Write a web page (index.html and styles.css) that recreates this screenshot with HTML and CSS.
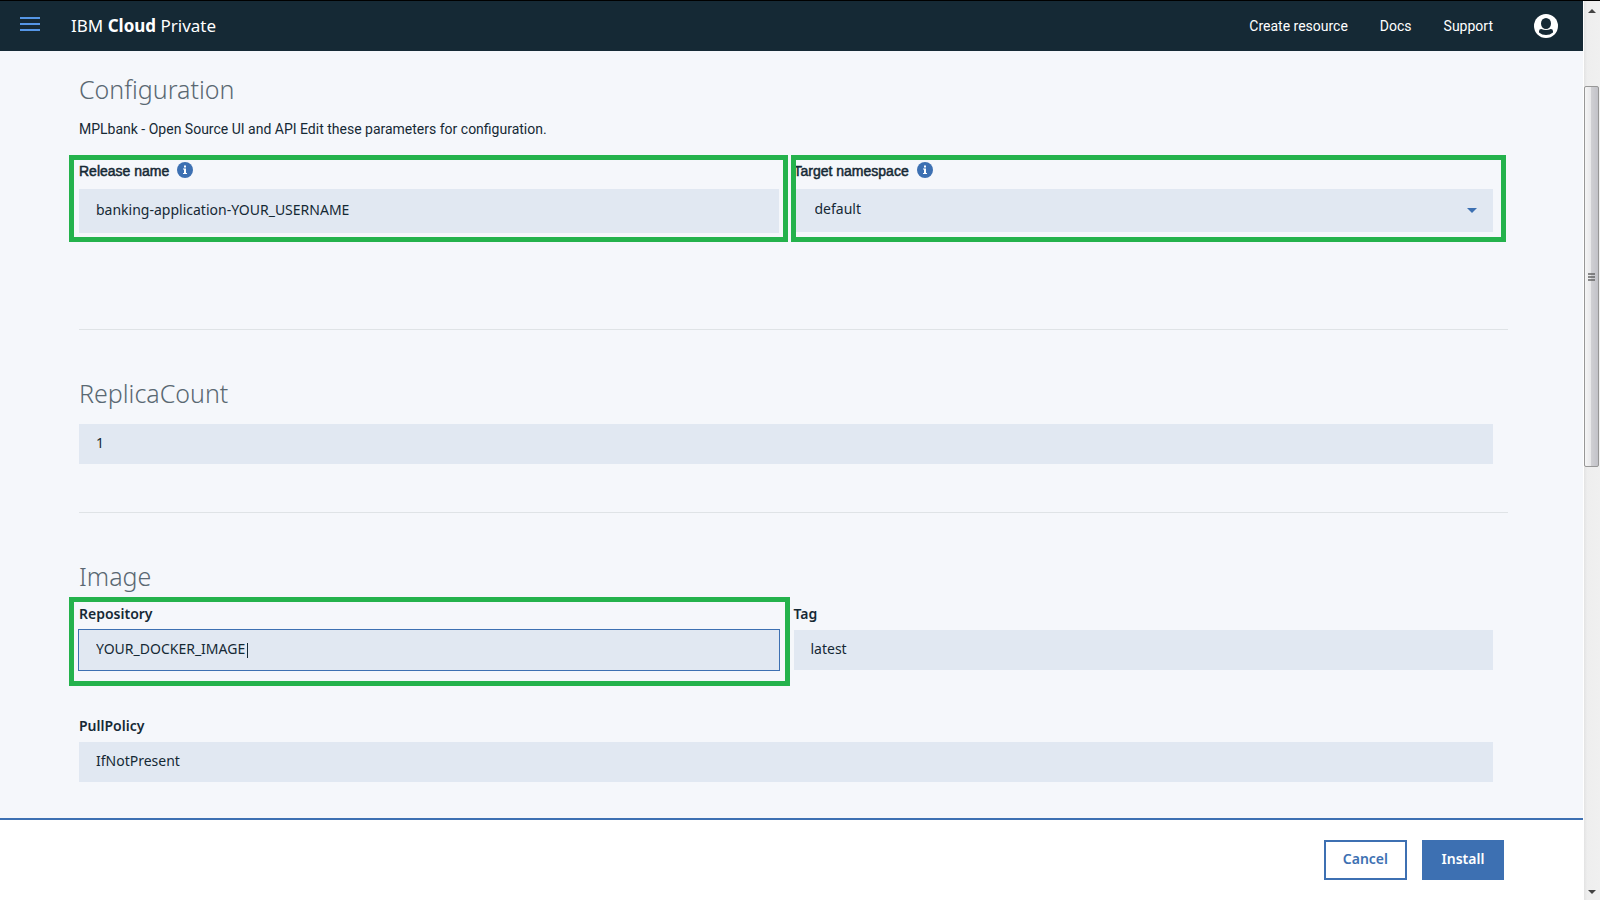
FILE: index.html
```html
<!DOCTYPE html>
<html lang="en">
<head>
<meta charset="utf-8">
<title>IBM Cloud Private</title>
<link rel="stylesheet" href="styles.css">
</head>
<body>
<div class="app">
  <header class="header">
    <button class="menu-button" type="button" aria-label="Menu">
      <svg width="20" height="14" viewBox="0 0 20 14"><path d="M0 1h20M0 7h20M0 13h20" stroke="#5596e6" stroke-width="2"/></svg>
    </button>
    <a class="brand" href="#">IBM <b>Cloud</b> Private</a>
    <nav class="nav">
      <a href="#">Create resource</a>
      <a href="#">Docs</a>
      <a href="#">Support</a>
    </nav>
    <button class="user-button" type="button" aria-label="Account">
      <svg width="24" height="24" viewBox="0 0 24 24"><circle cx="12" cy="12" r="12" fill="#fff"/><ellipse cx="12" cy="9.5" rx="5" ry="5.5" fill="#152935"/><path d="M5 17.200Q5 15 7.200 15Q12 17 16.800 15Q19 15 19 17.200V18.500Q16 21 12 21T5 18.500Z" fill="#152935"/></svg>
    </button>
  </header>

  <main class="content">
    <section class="section section-config">
      <h2>Configuration</h2>
      <p class="description">MPLbank - Open Source UI and API Edit these parameters for configuration.</p>
      <div class="row">
        <div class="field field-tall">
          <div class="label-line">
            <label class="label-plain" for="release">Release name</label>
            <svg class="info" width="16" height="16" viewBox="0 0 16 16"><circle cx="8" cy="8" r="8" fill="#3d70b2"/><path d="M7 3.500h2v2H7zM6 6.500h3v4.500h1v1H6v-1h1V7.500H6z" fill="#fff"/></svg>
          </div>
          <input id="release" type="text" value="banking-application-YOUR_USERNAME">
          <span class="highlight highlight-left"></span>
        </div>
        <div class="field field-tall">
          <div class="label-line">
            <label class="label-plain" for="namespace">Target namespace</label>
            <svg class="info" width="16" height="16" viewBox="0 0 16 16"><circle cx="8" cy="8" r="8" fill="#3d70b2"/><path d="M7 3.500h2v2H7zM6 6.500h3v4.500h1v1H6v-1h1V7.500H6z" fill="#fff"/></svg>
          </div>
          <div class="select-wrap">
            <select id="namespace"><option>default</option></select>
            <svg class="chevron" width="10" height="5" viewBox="0 0 10 5"><path d="M0 0h10L5 5z" fill="#3d70b2"/></svg>
          </div>
          <span class="highlight highlight-right"></span>
        </div>
      </div>
    </section>

    <section class="section section-replica">
      <h2 id="replica-title">ReplicaCount</h2>
      <div class="row">
        <div class="field"><input type="text" value="1" aria-labelledby="replica-title"></div>
      </div>
    </section>

    <section class="section">
      <h2>Image</h2>
      <div class="row row-image">
        <div class="field">
          <label for="repository">Repository</label>
          <div class="input-wrap">
            <input class="active" id="repository" type="text" value="YOUR_DOCKER_IMAGE">
            <span class="caret"></span>
          </div>
          <span class="highlight highlight-repository"></span>
        </div>
        <div class="field">
          <label for="tag">Tag</label>
          <input id="tag" type="text" value="latest">
        </div>
      </div>
      <div class="row">
        <div class="field">
          <label for="policy">PullPolicy</label>
          <input id="policy" type="text" value="IfNotPresent">
        </div>
      </div>
    </section>
  </main>

  <footer class="footer">
    <button class="button" type="button">Cancel</button>
    <button class="button button-primary" type="button">Install</button>
  </footer>
</div>

<div class="scrollbar" aria-hidden="true">
  <svg class="arrow" width="8" height="4" viewBox="0 0 8 4"><path d="M4 0l4 4H0z" fill="#444"/></svg>
  <div class="track">
    <div class="thumb"><svg width="7" height="8" viewBox="0 0 7 8"><path d="M0 1h7M0 4h7M0 7h7" stroke="#666" stroke-width="1.500"/></svg></div>
  </div>
  <svg class="arrow" width="8" height="4" viewBox="0 0 8 4"><path d="M0 0h8L4 4z" fill="#444"/></svg>
</div>
</body>
</html>
```

FILE: styles.css
```css
* { box-sizing: border-box; }

body {
  margin: 0;
  height: 100vh;
  display: flex;
  overflow: hidden;
  border-top: 1px solid #000;
  background: #f5f7fb;
  color: #152935;
  font-family: "Noto Sans", "Open Sans", sans-serif;
  font-size: 14px;
  line-height: 20px;
}

button, input, select { font: inherit; color: inherit; }
button { cursor: pointer; }
svg { display: block; }

.app {
  flex: 1;
  min-width: 0;
  display: flex;
  flex-direction: column;
}

.header {
  flex: none;
  height: 50px;
  padding: 0 25px 0 20px;
  display: flex;
  align-items: center;
  background: #152935;
  color: #fff;
}
.header a { color: inherit; text-decoration: none; }
.menu-button, .user-button { padding: 0; border: 0; background: none; }
.menu-button { padding-bottom: 4px; }
.brand { margin-left: 31px; font-size: 17px; line-height: 24px; }
.nav { margin-left: auto; display: flex; gap: 32px; }
.nav, .description { font-family: Roboto, "Noto Sans", sans-serif; }
.user-button { margin-left: 41px; }

.content {
  flex: 1;
  min-height: 0;
  overflow: hidden;
  padding: 20px 75px 0 79px;
}
.section + .section { border-top: 1px solid #dfe3e6; padding-top: 45px; }
.section-config { height: 258px; }
.section-replica { height: 183px; }

h2 {
  margin: 0;
  font-size: 25px;
  line-height: 36px;
  font-weight: 300;
  color: #5a6872;
}
.description { margin: 12px 0 22px; }

.row { display: flex; }
.row-image { margin: 10px 0 46px; }
.field { position: relative; flex: 1; min-width: 0; padding-right: 15px; }
.section-replica .row { margin-top: 13px; }
.label-line { display: flex; align-items: center; gap: 8px; height: 28px; padding-bottom: 8px; }
.info { margin-bottom: 2px; }

label { display: block; font-weight: 600; line-height: 20px; padding-bottom: 6px; }
.label-plain {
  padding: 0;
  font-family: "Liberation Sans", Arial, sans-serif;
  font-size: 14px;
  font-weight: 400;
  -webkit-text-stroke: 0.5px #152935;
}

input, select {
  display: block;
  width: 100%;
  height: 40px;
  padding: 0 17px 4px;
  border: 0;
  border-radius: 0;
  background: #e1e8f2;
  appearance: none;
}
.field-tall input { height: 44px; }
.select-wrap, .input-wrap { position: relative; }
.select-wrap select { height: 43px; padding: 0 40px 4px 21px; }
.chevron { position: absolute; right: 16px; top: 19px; }
.active { outline: 1px solid #3d70b2; }
.caret { position: absolute; left: 168px; top: 13px; width: 1px; height: 15px; background: #152935; }

.highlight { position: absolute; border: 5px solid #24b24c; pointer-events: none; }
.highlight-left { inset: -6px 6px -9px -10px; }
.highlight-right { inset: -6px 2px -9px -3px; }
.highlight-repository { inset: -7px 4px -16px -10px; }

.footer {
  flex: none;
  display: flex;
  justify-content: flex-end;
  gap: 15px;
  padding: 20px 79px 20px 20px;
  border-top: 2px solid #3d70b2;
  background: #fff;
}
.button {
  height: 40px;
  min-width: 82px;
  padding: 0 17px 2px;
  border: 2px solid #3d70b2;
  background: #fff;
  color: #3d70b2;
  font-weight: 600;
}
.button-primary { background: #3d70b2; color: #fff; }

.scrollbar {
  flex: none;
  width: 17px;
  display: flex;
  flex-direction: column;
  align-items: center;
  padding: 8px 1px 6px 0;
  border-left: 1px solid #fff;
  background: linear-gradient(90deg, #e3e3e3, #eee 20%, #f0f0f0);
}
.track { flex: 1; width: 100%; padding: 73px 0 42px; }
.thumb {
  height: 50%;
  display: flex;
  align-items: center;
  justify-content: center;
  border: 1px solid #979797;
  border-radius: 2px;
  background: linear-gradient(90deg, #f5f5f5, #e8e8ea 45%, #cfcfd3 50%, #c2c2c8);
}
```
